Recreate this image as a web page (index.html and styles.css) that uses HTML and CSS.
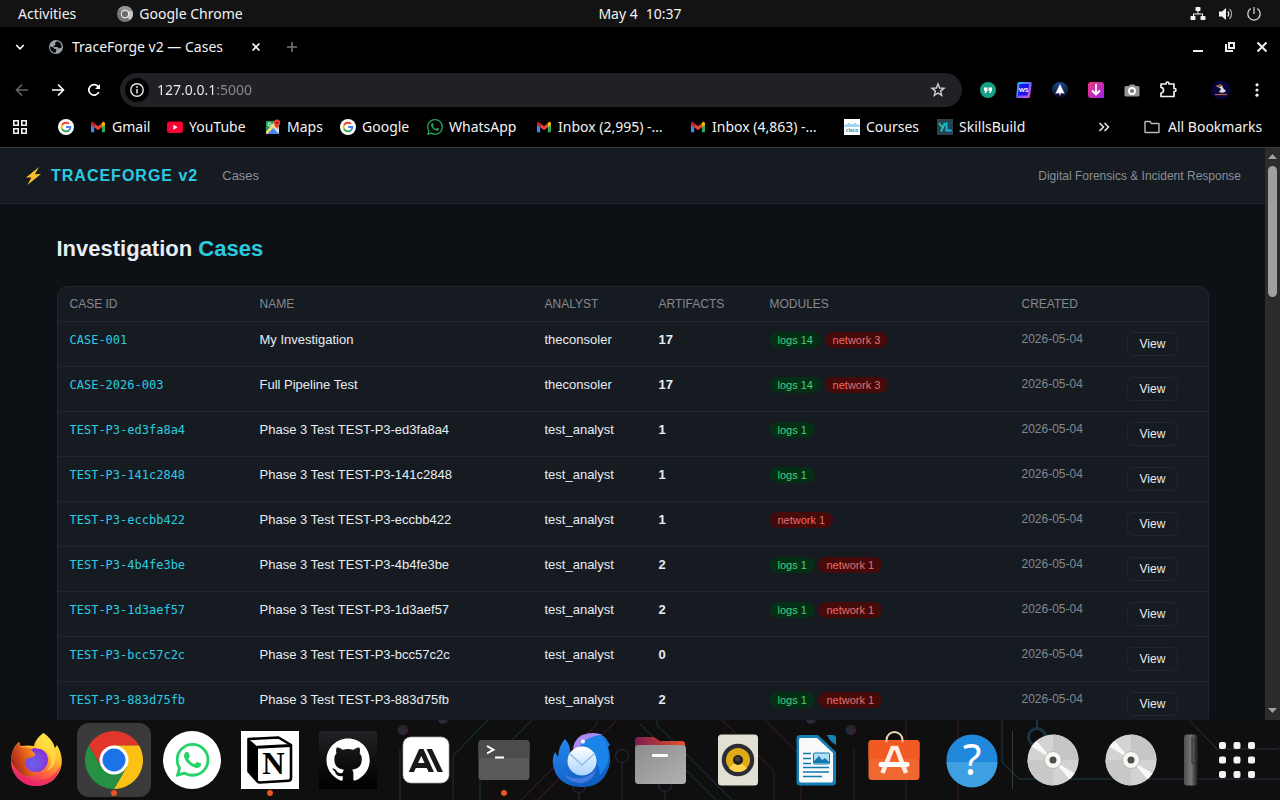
FILE: index.html
```html
<!DOCTYPE html>
<html lang="en">
<head>
<meta charset="utf-8">
<title>TraceForge v2 — Cases</title>
<link rel="stylesheet" href="styles.css">
</head>
<body>
<svg class="defs" aria-hidden="true">
  <defs>
    <symbol id="google" viewBox="0 0 16 16">
      <circle cx="8" cy="8" r="8" fill="#fff"/>
      <path d="M4.2 5.9A4.4 4.4 0 0 1 11 4.9" fill="none" stroke="#ea4335" stroke-width="1.9"/>
      <path d="M4.2 5.8A4.4 4.4 0 0 0 4.2 10.2" fill="none" stroke="#fbbc05" stroke-width="1.9"/>
      <path d="M4.1 10A4.4 4.4 0 0 0 10.8 11.4" fill="none" stroke="#34a853" stroke-width="1.9"/>
      <path d="M8 8H12.4A4.4 4.4 0 0 1 10.6 11.5" fill="none" stroke="#4285f4" stroke-width="1.9"/>
    </symbol>
    <symbol id="gmail" viewBox="0 0 16 16">
      <path d="M1 4.5V12.4q0 .9.9.9H4.2V6.8z" fill="#4285f4"/>
      <path d="M15 4.5V12.4q0 .9-.9.9H11.8V6.8z" fill="#34a853"/>
      <path d="M4.2 4.2 8 7.2l3.800-3V8.300L8 11.200 4.200 8.300z" fill="#ea4335"/>
      <path d="M1 4.500Q1 2.800 2.500 2.800 3.100 2.800 4.200 4.200V8.300L1 5.900z" fill="#c5221f"/>
      <path d="M15 4.500Q15 2.800 13.500 2.800 12.900 2.800 11.800 4.200V8.300L15 5.900z" fill="#fbbc04"/>
    </symbol>
    <symbol id="whatsapp" viewBox="0 0 24 24">
      <path fill="currentColor" d="M17.472 14.382c-.297-.149-1.758-.867-2.030-.967-.273-.099-.471-.148-.670.150-.197.297-.767.966-.940 1.164-.173.199-.347.223-.644.075-.297-.150-1.255-.463-2.390-1.475-.883-.788-1.480-1.761-1.653-2.059-.173-.297-.018-.458.130-.606.134-.133.298-.347.446-.520.149-.174.198-.298.298-.497.099-.198.050-.371-.025-.520-.075-.149-.669-1.612-.916-2.207-.242-.579-.487-.500-.669-.510-.173-.008-.371-.010-.570-.010-.198 0-.520.074-.792.372-.272.297-1.040 1.016-1.040 2.479 0 1.462 1.065 2.875 1.213 3.074.149.198 2.096 3.200 5.077 4.487.709.306 1.262.489 1.694.625.712.227 1.360.195 1.871.118.571-.085 1.758-.719 2.006-1.413.248-.694.248-1.289.173-1.413-.074-.124-.272-.198-.570-.347m-5.421 7.403h-.004a9.870 9.870 0 0 1-5.031-1.378l-.361-.214-3.741.982.998-3.648-.235-.374a9.860 9.860 0 0 1-1.510-5.260c.001-5.450 4.436-9.884 9.888-9.884 2.640 0 5.122 1.030 6.988 2.898a9.825 9.825 0 0 1 2.893 6.994c-.003 5.450-4.437 9.884-9.885 9.884m8.413-18.297A11.815 11.815 0 0 0 12.050 0C5.495 0 .160 5.335.157 11.892c0 2.096.547 4.142 1.588 5.945L.057 24l6.305-1.654a11.882 11.882 0 0 0 5.683 1.448h.005c6.554 0 11.890-5.335 11.893-11.893a11.821 11.821 0 0 0-3.480-8.413Z"/>
    </symbol>
    <symbol id="disc" viewBox="0 0 58 58">
      <circle cx="29" cy="29" r="25.500" fill="#d3d3d3"/>
      <path d="M29 29V3.500A25.500 25.500 0 0 1 54.500 29z" fill="#c6c6c6"/>
      <path d="M29 29V54.500A25.500 25.500 0 0 1 3.500 29z" fill="#c9c9c9"/>
      <path d="M29 29 7.500 15.500A25.500 25.500 0 0 1 12.500 9.700z" fill="#f8f8f8"/>
      <path d="M29 29 50.500 42.500A25.500 25.500 0 0 1 45.500 48.300z" fill="#f8f8f8"/>
      <circle cx="29" cy="29" r="8.500" fill="#f7f7f5" stroke="#b5aa98" stroke-width=".8"/>
      <circle cx="29" cy="29" r="3.500" fill="#4d4d4d"/>
    </symbol>
    <linearGradient id="ffBody" x1=".8" y1="0" x2=".3" y2="1">
      <stop offset="0" stop-color="#fff44f"/><stop offset=".35" stop-color="#ffbd2e"/><stop offset=".65" stop-color="#ff6a3c"/><stop offset="1" stop-color="#e2127a"/>
    </linearGradient>
    <linearGradient id="ffHead" x1="1" y1="0" x2="0" y2=".5">
      <stop offset="0" stop-color="#ffb02e"/><stop offset=".5" stop-color="#e8651c"/><stop offset="1" stop-color="#a8251c"/>
    </linearGradient>
    <radialGradient id="ffCore" cx=".4" cy=".65" r=".7"><stop offset="0" stop-color="#6b62f0"/><stop offset="1" stop-color="#8a2fd0"/></radialGradient>
    <linearGradient id="tbBody" x1="0" y1="0" x2=".4" y2="1"><stop offset="0" stop-color="#2a8df2"/><stop offset="1" stop-color="#0f5fc4"/></linearGradient>
    <linearGradient id="tbMail" x1="0" y1="0" x2="0" y2="1"><stop offset="0" stop-color="#fff"/><stop offset="1" stop-color="#a9d4ff"/></linearGradient>
    <linearGradient id="folderBack" x1="0" y1="0" x2="1" y2="0"><stop offset="0" stop-color="#7c1d4e"/><stop offset="1" stop-color="#e8512a"/></linearGradient>
    <linearGradient id="folderFront" x1="0" y1="0" x2="1" y2="1"><stop offset="0" stop-color="#8c8c8c"/><stop offset="1" stop-color="#b2b2b2"/></linearGradient>
    <linearGradient id="githubBack" x1="0" y1="0" x2="0" y2="1"><stop offset="0" stop-color="#202225"/><stop offset=".6" stop-color="#0b0c0d"/><stop offset="1" stop-color="#020202"/></linearGradient>
    <linearGradient id="drive" x1="0" y1="0" x2="1" y2="0"><stop offset="0" stop-color="#4e4e4e"/><stop offset=".5" stop-color="#777"/><stop offset="1" stop-color="#161616"/></linearGradient>
    <linearGradient id="wsBack" x1="0" y1="0" x2="1" y2="1"><stop offset="0" stop-color="#16d4f5"/><stop offset=".5" stop-color="#6a60ff"/><stop offset="1" stop-color="#ff45c8"/></linearGradient>
    <linearGradient id="dlBack" x1="0" y1="0" x2="1" y2="1"><stop offset="0" stop-color="#ef3c78"/><stop offset="1" stop-color="#a01cf0"/></linearGradient>
    <linearGradient id="rocketBack" x1="0" y1="0" x2="0" y2="1"><stop offset="0" stop-color="#174a8c"/><stop offset="1" stop-color="#0a0718"/></linearGradient>
    <linearGradient id="dot" x1="0" y1="0" x2="1" y2="0"><stop offset="0" stop-color="#1d3040"/><stop offset="1" stop-color="#3d1d29"/></linearGradient>
  </defs>
</svg>

<header class="topbar">
  <div class="topbar-left">
    <button type="button" class="plain">Activities</button>
    <button type="button" class="plain app-menu">
      <svg width="16" height="16" viewBox="0 0 16 16"><circle cx="8" cy="8" r="8" fill="#777"/><path d="M8 8 13 14.200A8 8 0 0 0 15.300 5H9z" fill="#c8c8c8"/><path d="M1.200 4A8 8 0 0 1 15.300 4.700H8z" fill="#969696"/><circle cx="8" cy="8" r="4.200" fill="#eee"/><circle cx="8" cy="8" r="3.100" fill="#6b6b6b"/></svg>
      Google Chrome
    </button>
  </div>
  <button type="button" class="plain clock"><span>May 4</span><span>10:37</span></button>
  <div class="topbar-right">
    <svg width="16" height="16" viewBox="0 0 16 16" fill="#f2f2f2"><rect x="5.500" y="1" width="5" height="4" rx=".7"/><rect x="0.500" y="10" width="5" height="4" rx=".7"/><rect x="10.500" y="10" width="5" height="4" rx=".7"/><path d="M7.500 5h1v2.500H13V10h-1V8.500H4V10H3V7.500h4.500z"/></svg>
    <svg width="16" height="16" viewBox="0 0 16 16" fill="none" stroke="#eee"><path d="M1 5.500H4L8 2V14L4 10.500H1z" fill="#f2f2f2" stroke="none"/><path d="M9.700 5.500a3.500 3.500 0 0 1 0 5" stroke-width="1.300"/><path d="M11.500 3a7 7 0 0 1 0 10" stroke="#aaa" stroke-width="1.200"/></svg>
    <svg width="16" height="16" viewBox="0 0 16 16" fill="none" stroke="#ddd" stroke-width="1.200"><path d="M4.800 2.600A6.200 6.200 0 1 0 11.200 2.600M8 1V8"/></svg>
  </div>
</header>

<nav class="tabs" aria-label="Tabs">
  <button type="button" class="icon-btn tab-search" aria-label="Search tabs"><svg width="10" height="10" viewBox="0 0 10 10" fill="none" stroke="#fff" stroke-width="1.700"><path d="M1.200 3 5 6.800 8.800 3"/></svg></button>
  <button type="button" class="plain tab">
    <svg width="16" height="16" viewBox="0 0 16 16"><circle cx="8" cy="8" r="7" fill="#9aa0a8"/><path d="M2 7.500 5.500 8.500 6.500 10 8.500 10.500 7.500 13.800A6 6 0 0 1 2 7.500zM9 2.200 7 4 7.500 6 5.500 7 6 8 9.500 8 11 9.500 13.500 8.500A6 6 0 0 0 9 2.200z" fill="#000"/></svg>
    <span>TraceForge v2 — Cases</span>
  </button>
  <button type="button" class="icon-btn tab-close" aria-label="Close tab"><svg width="8" height="8" viewBox="0 0 8 8" stroke="#fff" stroke-width="1.600"><path d="M.5.5 7.500 7.500M7.500.5.5 7.500"/></svg></button>
  <button type="button" class="icon-btn tab-new" aria-label="New tab"><svg width="12" height="12" viewBox="0 0 12 12" stroke="#777" stroke-width="1.500"><path d="M6 1V11M1 6H11"/></svg></button>
  <div class="window-buttons">
    <button type="button" class="icon-btn" aria-label="Minimize"><svg width="12" height="12" viewBox="0 0 12 12"><path d="M1 9H11V11H1z" fill="#eee"/></svg></button>
    <button type="button" class="icon-btn" aria-label="Restore"><svg width="12" height="12" viewBox="0 0 12 12" fill="none" stroke="#eee" stroke-width="2"><path d="M5 2H10V7H5zM2 3V10H9"/></svg></button>
    <button type="button" class="icon-btn" aria-label="Close window"><svg width="12" height="12" viewBox="0 0 12 12" stroke="#eee" stroke-width="2"><path d="M1.500 1.500 10.500 10.500M10.500 1.500 1.500 10.500"/></svg></button>
  </div>
</nav>

<div class="toolbar">
  <button type="button" class="icon-btn" aria-label="Back"><svg width="14" height="14" viewBox="0 0 14 14" fill="none" stroke="#666" stroke-width="1.600"><path d="M13 7H2M7 1.500 1.500 7 7 12.500"/></svg></button>
  <button type="button" class="icon-btn" aria-label="Forward"><svg width="14" height="14" viewBox="0 0 14 14" fill="none" stroke="#fff" stroke-width="1.600"><path d="M1 7H12M7 1.500 12.500 7 7 12.500"/></svg></button>
  <button type="button" class="icon-btn" aria-label="Reload"><svg width="14" height="14" viewBox="0 0 14 14"><path d="M11.800 9A5.200 5.200 0 1 1 10.700 3.200L12 4.500" fill="none" stroke="#fff" stroke-width="1.700"/><path d="M13 1V6H8z" fill="#fff"/></svg></button>
  <div class="omnibox">
    <button type="button" class="site-info" aria-label="Site information"><svg width="14" height="14" viewBox="0 0 14 14"><circle cx="7" cy="7" r="6.200" fill="none" stroke="#e8e8e8" stroke-width="1.400"/><path d="M7 6V10.500M7 3.300V4.900" stroke="#e8e8e8" stroke-width="1.500"/></svg></button>
    <input type="text" class="address" aria-label="Address" value="127.0.0.1:5000">
    <button type="button" class="icon-btn" aria-label="Bookmark this page"><svg width="16" height="16" viewBox="0 0 16 16" fill="none" stroke="#d0d0d0" stroke-width="1.400"><path d="M8 1.900 9.600 6 14 6.300 10.600 9.100 11.700 13.400 8 11 4.300 13.400 5.400 9.100 2 6.300 6.400 6z"/></svg></button>
  </div>
  <div class="extensions">
    <button type="button" class="icon-btn" aria-label="Quotes"><svg width="16" height="16" viewBox="0 0 16 16"><circle cx="8" cy="8" r="8" fill="#16a085"/><path d="M4 5.500H7.500V8.500L6 11H4.500L5.500 8.800H4zM8.500 5.500H12V8.500L10.500 11H9L10 8.800H8.500z" fill="#fff"/></svg></button>
    <button type="button" class="icon-btn" aria-label="WS"><svg width="16" height="16" viewBox="0 0 16 16"><path d="M3 0H14.500Q16 0 15.700 2L14 14.500Q13.800 16 12 16H1Q0 16 .2 14L1.500 1.500Q1.700 0 3 0z" fill="url(#wsBack)"/><path d="M3.500 2H13L11.500 13.500H2z" fill="#1c13e8"/><text x="7.600" y="10.200" font-family="Lato" font-size="6" font-weight="900" text-anchor="middle" fill="#fff">WS</text></svg></button>
    <button type="button" class="icon-btn" aria-label="Rocket"><svg width="16" height="16" viewBox="0 0 16 16"><circle cx="8" cy="8" r="8" fill="url(#rocketBack)"/><path d="M8 2 10.600 7.500 12.500 11.500 9 11 8 13.500 7 11 3.500 11.500 5.400 7.500z" fill="#fff" stroke="#9e8cff" stroke-width=".4"/></svg></button>
    <button type="button" class="icon-btn" aria-label="Download"><svg width="16" height="16" viewBox="0 0 16 16"><path d="M3 0H13Q16 0 16 3V16H3Q0 16 0 13V3Q0 0 3 0z" fill="url(#dlBack)"/><path d="M8 2V12.500M4 8.500 8 12.500 12 8.500" fill="none" stroke="#fff" stroke-width="1.800"/></svg></button>
    <button type="button" class="icon-btn" aria-label="Camera"><svg width="16" height="16" viewBox="0 0 16 16"><path d="M2 4H5L6 2.500H10.500L11.500 4H14Q15.500 4 15.500 5.500V13Q15.500 14.500 14 14.500H2Q.5 14.500.5 13V5.500Q.5 4 2 4z" fill="#969696"/><circle cx="8" cy="9" r="3" fill="#777" stroke="#fff" stroke-width="1.800"/></svg></button>
    <button type="button" class="icon-btn" aria-label="Extensions"><svg width="18" height="18" viewBox="0 0 18 18" fill="none" stroke="#f2f2f2" stroke-width="1.700" stroke-linejoin="round"><path d="M2 3H7V2.500a1.500 1.500 0 0 1 3 0V3H15V7.500h.5a1.500 1.500 0 0 1 0 3H15V15.500H2V12Q4.500 12 4.500 9.200 4.500 6.500 2 6.500z"/></svg></button>
  </div>
  <button type="button" class="icon-btn profile" aria-label="Profile"><svg width="20" height="20" viewBox="0 0 20 20"><circle cx="10" cy="10" r="9.700" fill="#06063a"/><path d="M5 6 9 4.500 11 5 12 8 15 11Q13 14 8 12L10 9 8 7.500z" fill="#d9dbe2"/><path d="M5 6 9 4 11.500 5.500 9 7z" fill="#a24a36"/><path d="M4 14.500H16" stroke="#b05a43" stroke-width="1.300"/></svg></button>
  <button type="button" class="icon-btn" aria-label="Menu"><svg width="16" height="16" viewBox="0 0 16 16" fill="#f2f2f2"><circle cx="8" cy="2.800" r="1.600"/><circle cx="8" cy="8" r="1.600"/><circle cx="8" cy="13.200" r="1.600"/></svg></button>
</div>

<nav class="bookmarks" aria-label="Bookmarks">
  <button type="button" class="icon-btn apps-btn" aria-label="Apps"><svg width="14" height="14" viewBox="0 0 14 14" fill="none" stroke="#f2f2f2" stroke-width="1.600"><path d="M.8.8H5.200V5.200H.8zM8.800.8H13.200V5.200H8.800zM.8 8.800H5.200V13.200H.8zM8.800 8.800H13.200V13.200H8.800z"/></svg></button>
  <div class="bookmark-list">
    <a href="#" aria-label="Google search"><svg><use href="#google"/></svg></a>
    <a href="#"><svg><use href="#gmail"/></svg><span>Gmail</span></a>
    <a href="#"><svg viewBox="0 0 16 16"><rect y="2.500" width="16" height="11.500" rx="3" fill="#f03"/><path d="M6.300 5.700 10.600 8.200 6.300 10.700z" fill="#fff"/></svg><span>YouTube</span></a>
    <a href="#"><svg viewBox="0 0 16 16"><rect x="1" y="2" width="13" height="13" rx="1.500" fill="#e8eaed"/><path d="M1 3Q1 2 2.500 2H10L1 13z" fill="#1e9e58"/><path d="M1.500 15 8 8.500 14 15z" fill="#4285f4"/><path d="M1 13 10.500 3 12 5 2.500 15Q1 15 1 13z" fill="#fdd663"/><path d="M8.500 9 14 14.500V7z" fill="#ddd"/><circle cx="4.500" cy="5.400" r="1.500" fill="none" stroke="#fff"/><path d="M12 .5A3.300 3.300 0 0 1 15.300 4Q15 6 12 10 9 6 8.700 4A3.300 3.300 0 0 1 12 .5z" fill="#e34133"/><circle cx="12" cy="3.900" r="1.100" fill="#8c1a11"/></svg><span>Maps</span></a>
    <a href="#"><svg><use href="#google"/></svg><span>Google</span></a>
    <a href="#" class="wa-link"><svg><use href="#whatsapp"/></svg><span>WhatsApp</span></a>
    <a href="#"><svg><use href="#gmail"/></svg><span>Inbox (2,995) -…</span></a>
    <a href="#"><svg><use href="#gmail"/></svg><span>Inbox (4,863) -…</span></a>
    <a href="#"><svg viewBox="0 0 16 16"><path d="M0 0H16V16H0z" fill="#fff"/><path d="M1 6V8M3 5V8M5 3.800V8M7 5V8M9 5V8M11 3.800V8M13 5V8M15 6V8" stroke="#2aa4d6" stroke-width=".9"/><text x="8" y="13" font-family="Lato" font-size="5.500" font-weight="900" text-anchor="middle" fill="#1b8fc0">cisco</text></svg><span>Courses</span></a>
    <a href="#"><svg viewBox="0 0 16 16"><path d="M0 0H16V16H0z" fill="#29434e"/><path d="M2 4 5 8M8 4 4 12.500" stroke="#19c5b0" stroke-width="2" fill="none"/><path d="M9.500 3.500V11.500H14.500" stroke="#12b8e8" stroke-width="2" fill="none"/></svg><span>SkillsBuild</span></a>
  </div>
  <button type="button" class="icon-btn more-btn" aria-label="More bookmarks"><svg width="12" height="12" viewBox="0 0 12 12" fill="none" stroke="#eee" stroke-width="1.500"><path d="M1.500 2 5.500 6 1.500 10M6.500 2 10.500 6 6.500 10"/></svg></button>
  <a href="#" class="all-bookmarks"><svg viewBox="0 0 16 16" fill="none" stroke="#bbb" stroke-width="1.400"><path d="M1 3Q1 2.500 1.500 2.500H6L7.500 4.500H14.500Q15 4.500 15 5V13Q15 13.500 14.500 13.500H1.500Q1 13.500 1 13z"/></svg><span>All Bookmarks</span></a>
</nav>

<div class="viewport">
  <div class="page">
    <header class="site-header">
      <a href="#" class="brand"><svg width="18" height="18" viewBox="0 0 18 18"><path d="M15 0 2 10.600 7.400 10.400 3.400 18 17 7 10.800 7.300z" fill="#fbc02d"/></svg>TRACEFORGE v2</a>
      <a href="#" class="site-link">Cases</a>
      <span class="tagline">Digital Forensics &amp; Incident Response</span>
    </header>
    <main class="content">
      <h1>Investigation <span>Cases</span></h1>
      <div class="card">
        <table>
          <colgroup><col class="c-id"><col class="c-name"><col class="c-analyst"><col class="c-artifacts"><col class="c-modules"><col class="c-created"><col class="c-action"></colgroup>
          <thead><tr><th>CASE ID</th><th>NAME</th><th>ANALYST</th><th>ARTIFACTS</th><th>MODULES</th><th>CREATED</th><td></td></tr></thead>
          <tbody>
            <tr><td class="id">CASE-001</td><td>My Investigation</td><td>theconsoler</td><td><b>17</b></td><td><span class="badge logs">logs 14</span> <span class="badge network">network 3</span></td><td class="date">2026-05-04</td><td><a href="#" class="view">View</a></td></tr>
            <tr><td class="id">CASE-2026-003</td><td>Full Pipeline Test</td><td>theconsoler</td><td><b>17</b></td><td><span class="badge logs">logs 14</span> <span class="badge network">network 3</span></td><td class="date">2026-05-04</td><td><a href="#" class="view">View</a></td></tr>
            <tr><td class="id">TEST-P3-ed3fa8a4</td><td>Phase 3 Test TEST-P3-ed3fa8a4</td><td>test_analyst</td><td><b>1</b></td><td><span class="badge logs">logs 1</span></td><td class="date">2026-05-04</td><td><a href="#" class="view">View</a></td></tr>
            <tr><td class="id">TEST-P3-141c2848</td><td>Phase 3 Test TEST-P3-141c2848</td><td>test_analyst</td><td><b>1</b></td><td><span class="badge logs">logs 1</span></td><td class="date">2026-05-04</td><td><a href="#" class="view">View</a></td></tr>
            <tr><td class="id">TEST-P3-eccbb422</td><td>Phase 3 Test TEST-P3-eccbb422</td><td>test_analyst</td><td><b>1</b></td><td><span class="badge network">network 1</span></td><td class="date">2026-05-04</td><td><a href="#" class="view">View</a></td></tr>
            <tr><td class="id">TEST-P3-4b4fe3be</td><td>Phase 3 Test TEST-P3-4b4fe3be</td><td>test_analyst</td><td><b>2</b></td><td><span class="badge logs">logs 1</span> <span class="badge network">network 1</span></td><td class="date">2026-05-04</td><td><a href="#" class="view">View</a></td></tr>
            <tr><td class="id">TEST-P3-1d3aef57</td><td>Phase 3 Test TEST-P3-1d3aef57</td><td>test_analyst</td><td><b>2</b></td><td><span class="badge logs">logs 1</span> <span class="badge network">network 1</span></td><td class="date">2026-05-04</td><td><a href="#" class="view">View</a></td></tr>
            <tr><td class="id">TEST-P3-bcc57c2c</td><td>Phase 3 Test TEST-P3-bcc57c2c</td><td>test_analyst</td><td><b>0</b></td><td></td><td class="date">2026-05-04</td><td><a href="#" class="view">View</a></td></tr>
            <tr><td class="id">TEST-P3-883d75fb</td><td>Phase 3 Test TEST-P3-883d75fb</td><td>test_analyst</td><td><b>2</b></td><td><span class="badge logs">logs 1</span> <span class="badge network">network 1</span></td><td class="date">2026-05-04</td><td><a href="#" class="view">View</a></td></tr>
          </tbody>
        </table>
      </div>
    </main>
  </div>
  <div class="scrollbar" aria-hidden="true">
    <svg width="15" height="18" viewBox="0 0 15 18"><path d="M3 11H12L7.500 6z" fill="#a0a0a0"/></svg>
    <div class="track"><div class="thumb"></div></div>
    <svg width="15" height="18" viewBox="0 0 15 18"><path d="M3 6H12L7.500 11z" fill="#a0a0a0"/></svg>
  </div>
</div>

<footer class="dock">
  <svg class="circuit" width="1280" height="80" viewBox="0 720 1280 80" fill="none" stroke-width="1.300" aria-hidden="true">
    <g stroke="#162a34"><path d="M488 720 453 756V800M532 720 480 772V800M640 724 716 800M657 720V725L732 800"/><path d="M1002 720V762L1019 779H1140" stroke="#183039"/></g>
    <g stroke="#252331"><path d="M400 749V800M622 763V800M579 793V800M854 749V800M665 792V800M1189 720 1217 749H1278L1280 747M1140 779H1280"/><circle cx="622" cy="756" r="6.500"/><circle cx="579" cy="786" r="6.500"/><circle cx="665" cy="785" r="6.500"/></g>
    <g stroke="#301923"><path d="M597 720V724L521 800M617 720 538 800M722 720 774 771V800M765 720 801 756V800M906 720V800M958 720V800"/></g>
    <g fill="url(#dot)"><circle cx="403" cy="730" r="5"/><circle cx="443" cy="719" r="5"/><circle cx="811" cy="719" r="5"/><circle cx="851" cy="730" r="5"/></g>
    <path d="M1037 720V728" stroke="#183743" stroke-width="2"/><circle cx="1037" cy="737" r="8.500" stroke="#183743" stroke-width="3"/>
  </svg>
  <div class="dock-items">
    <button type="button" aria-label="Firefox"><svg viewBox="0 0 58 58"><path d="M36.500 2C42 6 46 10 48 17L50 14Q56 24 54.500 34C52 47 42 55 29 55 15 55 4 44 4 30 4 22 7 15 12 11L13.500 15Q22 14 27 15 28 8 36.500 2z" fill="url(#ffBody)"/><circle cx="29" cy="29" r="12" fill="url(#ffCore)"/><path d="M4 30Q4 18 12.500 11L13.500 16 22 17 28.500 23Q27 27 21 27 17 29 19 36 23 43 31 42 20 50 11 40 6 35 4 30z" fill="url(#ffHead)"/><path d="M29 18Q38 17 42 23 47 31 40 40 50 35 49 23 45 10 36.500 2 29 7 30 16z" fill="#ffdf45" opacity=".7"/><path d="M6 38Q20 54 39 48 48 45 53 35 50 54 29 55 13 55 6 38z" fill="#ee2867" opacity=".65"/></svg></button>
    <button type="button" class="active running" aria-label="Google Chrome"><svg viewBox="0 0 48 48"><path d="M24 12H44.780A24 24 0 0 0 3.220 12L13.600 30 24 24z" fill="#e0362c"/><path d="M34.390 30 24 48A24 24 0 0 0 44.780 12H24V24z" fill="#fcc213"/><path d="M13.600 30 3.220 12A24 24 0 0 0 24 48L34.390 30 24 24z" fill="#269044"/><circle cx="24" cy="24" r="12" fill="#fff"/><circle cx="24" cy="24" r="9.500" fill="#1a73e8"/></svg></button>
    <button type="button" class="wa" aria-label="WhatsApp"><svg viewBox="0 0 58 58"><circle cx="29" cy="29" r="29" fill="#fff"/><use href="#whatsapp" x="12.500" y="12" width="34" height="34"/></svg></button>
    <button type="button" class="running" aria-label="Notion"><svg viewBox="0 0 58 58"><path d="M0 0H58V58H0z" fill="#fff"/><path d="M7.500 8 37.500 6.500 50 14V47Q50 49.500 47.500 49.700L18.500 51.500Q17 51.500 16 50L7.500 40.500z" fill="#fff" stroke="#000" stroke-width="2.600" stroke-linejoin="round"/><path d="M7.500 8 17 16V51L7.500 40.500z" fill="#000"/><path d="M16 16.300 50 14.500" stroke="#000" stroke-width="3"/><text x="32.500" y="43" font-family="Liberation Serif, serif" font-size="31" font-weight="700" text-anchor="middle">N</text></svg></button>
    <button type="button" aria-label="GitHub"><svg viewBox="0 0 58 58"><path d="M0 0H58V58H0z" fill="url(#githubBack)"/><path transform="translate(7.500 7) scale(1.800)" fill="#fff" d="M12 .297c-6.630 0-12 5.373-12 12 0 5.303 3.438 9.800 8.205 11.385.600.113.820-.258.820-.577 0-.285-.010-1.040-.015-2.040-3.338.724-4.042-1.610-4.042-1.610C4.422 18.070 3.633 17.700 3.633 17.700c-1.087-.744.084-.729.084-.729 1.205.084 1.838 1.236 1.838 1.236 1.070 1.835 2.809 1.305 3.495.998.108-.776.417-1.305.760-1.605-2.665-.300-5.466-1.332-5.466-5.930 0-1.310.465-2.380 1.235-3.220-.135-.303-.540-1.523.105-3.176 0 0 1.005-.322 3.300 1.230.960-.267 1.980-.399 3-.405 1.020.006 2.040.138 3 .405 2.280-1.552 3.285-1.230 3.285-1.230.645 1.653.240 2.873.120 3.176.765.840 1.230 1.910 1.230 3.220 0 4.610-2.805 5.625-5.475 5.920.420.360.810 1.096.810 2.220 0 1.606-.015 2.896-.015 3.286 0 .315.210.690.825.570C20.565 22.092 24 17.592 24 12.297c0-6.627-5.373-12-12-12"/></svg></button>
    <button type="button" aria-label="Anthropic"><svg viewBox="0 0 58 58"><rect x="6" y="6" width="46" height="46" rx="8" fill="#fff" stroke="#aaa" stroke-width=".7"/><path d="M13 44 24.300 19 35.600 44M18 34.500H31" fill="none" stroke="#191919" stroke-width="4.800" stroke-linejoin="bevel"/><path d="M29.500 18H35L46 41H40.500z" fill="#191919"/><rect x="9" y="41" width="40" height="7" fill="#fff"/></svg></button>
    <button type="button" class="running" aria-label="Terminal"><svg viewBox="0 0 58 58"><rect x="3.500" y="9" width="51" height="40" rx="3.500" fill="#5a5a5a"/><path d="M3.500 27V12.500Q3.500 9 7 9H51Q54.500 9 54.500 12.500V27z" fill="#4c4c4c"/><path d="M12 15 18.500 18.700 12 22.500M20 26.500H29" fill="none" stroke="#fff" stroke-width="2"/></svg></button>
    <button type="button" aria-label="Thunderbird"><svg viewBox="0 0 58 58"><path d="M12 8Q18 15 17 22 19 20 22 20 23 10 29 6 36 1 45 3 52 4 55 11L57 14 55 16Q60 31 53 43 46 56 29 56 11 56 3 43-3 30 2 21L5 26Q6 14 12 8z" fill="url(#tbBody)"/><path d="M20 20Q20 9 29 4 40 0 50 4 40 4 35 9 29 12 25 18z" fill="#a98bf0"/><path d="M25 18Q34 4 45 6 52 7 54 15 59 31 47 44 46 22 25 18z" fill="#1a84ea"/><circle cx="29" cy="30" r="14.500" fill="url(#tbMail)"/><path d="M17 23 29 34 41 23" fill="none" stroke="#8eb9e8" stroke-width="1.300"/><path d="M10 42Q17 49 29 47 38 45 43 38 40 51 28 52 16 52 10 42z" fill="#5b83e8" opacity=".7"/><circle cx="30" cy="10.500" r="2" fill="#fff"/></svg></button>
    <button type="button" aria-label="Files"><svg viewBox="0 0 58 58"><path d="M4 17V9Q4 6 7 6H23L29 10H51Q54 10 54 13V25H4z" fill="url(#folderBack)"/><rect x="4" y="14" width="51" height="39" rx="3.500" fill="url(#folderFront)"/><rect x="21" y="23" width="16" height="3" rx="1" fill="#fff"/></svg></button>
    <button type="button" aria-label="Rhythmbox"><svg viewBox="0 0 58 58"><rect x="9" y="3.500" width="40" height="51" rx="3.500" fill="#e2dfd3"/><circle cx="29" cy="29" r="16.200" fill="#2c2c35"/><circle cx="29" cy="29" r="12" fill="#e0aa16"/><path d="M29 29 20 37A12 12 0 0 0 38 37z" fill="#ffd34e"/><circle cx="29" cy="29" r="5" fill="#24221e"/><circle cx="28.500" cy="28" r="2.500" fill="#45403a"/></svg></button>
    <button type="button" aria-label="LibreOffice Writer"><svg viewBox="0 0 58 58"><path d="M13 4H31L49 21V51Q49 54.500 45.500 54.500H13Q9.500 54.500 9.500 51V7.500Q9.500 4 13 4z" fill="#157eb3"/><path d="M40 4H46Q49 4 49 7V14Q43 11 40 4z" fill="#187fb4"/><path d="M14 7H30L46 22V49Q46 51.500 44 51.500H14Q12 51.500 12 49V9Q12 7 14 7z" fill="#f7f9fa"/><path d="M16 22.500H24M16 27.500H24M16 32.500H24M16 36.500H42M16 41H42M16 45.500H35" stroke="#1278ad" stroke-width="1.700"/><rect x="26.500" y="22" width="16" height="11" rx="1" fill="#aedff6" stroke="#1278ad"/><path d="M27 32V30L32 25 35 29 38 27 42 31V32z" fill="#1278ad"/></svg></button>
    <button type="button" aria-label="Software"><svg viewBox="0 0 58 58"><rect x="3.500" y="9" width="51" height="40" rx="3.500" fill="#f0672f"/><path d="M3.500 28V12.500Q3.500 9 7 9H51Q54.500 9 54.500 12.500V28z" fill="#f15a22"/><path d="M21.500 11V9A8 8 0 0 1 37.500 9V11" fill="none" stroke="#eed8b2" stroke-width="2"/><path d="M17.500 42 27.500 17H31.500L41 42" fill="none" stroke="#ffece3" stroke-width="4.500"/><rect x="13.500" y="31" width="31" height="5" rx="2.500" fill="#fff"/></svg></button>
    <button type="button" aria-label="Help"><svg viewBox="0 0 58 58"><circle cx="29" cy="29" r="25.500" fill="#2189dc"/><path d="M3.500 31H54.500A25.500 25.500 0 0 1 3.500 31z" fill="#3e9fe3"/><text x="29" y="44" font-family="Noto Sans, sans-serif" font-size="43" text-anchor="middle" fill="#fff">?</text></svg></button>
    <span class="divider"></span>
    <button type="button" aria-label="Disc 1"><svg><use href="#disc"/></svg></button>
    <button type="button" aria-label="Disc 2"><svg><use href="#disc"/></svg></button>
    <button type="button" class="cut" aria-label="Drive"><svg viewBox="0 0 20 58"><rect x="6" y="3.500" width="14" height="51" rx="3" fill="url(#drive)"/><path d="M14 6V32H20M16 10H20M16 16H20M16 22H20M16 27H20" fill="none" stroke="#2b2b2b"/></svg></button>
    <button type="button" aria-label="Show applications"><svg viewBox="0 0 58 58" fill="#f4f4f4"><rect x="11" y="11" width="7" height="7" rx="2"/><rect x="25.500" y="11" width="7" height="7" rx="2"/><rect x="40" y="11" width="7" height="7" rx="2"/><rect x="11" y="25.500" width="7" height="7" rx="2"/><rect x="25.500" y="25.500" width="7" height="7" rx="2"/><rect x="40" y="25.500" width="7" height="7" rx="2"/><rect x="11" y="40" width="7" height="7" rx="2"/><rect x="25.500" y="40" width="7" height="7" rx="2"/><rect x="40" y="40" width="7" height="7" rx="2"/></svg></button>
  </div>
</footer>
</body>
</html>
```

FILE: styles.css
```css
* { box-sizing: border-box; }

body {
  margin: 0;
  height: 100vh;
  display: flex;
  flex-direction: column;
  overflow: hidden;
  background: #000;
  color: #f2f2f2;
  font: 14px/20px "Noto Sans", sans-serif;
}

button { font: inherit; color: inherit; background: none; border: 0; padding: 0; }
a { color: inherit; text-decoration: none; }
svg { display: block; flex: none; overflow: visible; }
.defs { position: absolute; width: 0; height: 0; }
.plain { display: flex; align-items: center; gap: 6px; white-space: nowrap; }
.icon-btn { display: flex; align-items: center; justify-content: center; width: 36px; height: 34px; flex: none; }

/* Desktop top bar */
.topbar { flex: none; display: grid; grid-template-columns: 1fr auto 1fr; align-items: center; height: 27px; padding: 0 18px; background: #131313; }
.topbar-left { display: flex; gap: 41px; }
.clock { gap: 8px; }
.topbar-right { display: flex; justify-content: flex-end; gap: 12px; }

/* Tab strip */
.tabs { flex: none; display: flex; align-items: center; height: 40px; padding-left: 2px; }
.tab { gap: 8px; width: 192px; padding-left: 10px; }
.tab-close { width: 36px; margin-left: 8px; }
.window-buttons { display: flex; margin-left: auto; margin-right: 2px; }
.window-buttons .icon-btn { width: 32px; }

/* Toolbar */
.toolbar { flex: none; display: flex; align-items: center; height: 46px; padding: 0 5px 0 4px; }
.omnibox { flex: 1; display: flex; align-items: center; height: 34px; margin: 0 8px; padding: 0 6px 0 5px; border-radius: 17px; background: #202124; }
.site-info { display: flex; align-items: center; justify-content: center; width: 24px; height: 24px; border-radius: 50%; background: #000; }
.address {
  flex: 1;
  min-width: 0;
  margin-left: 8px;
  padding: 0;
  border: 0;
  outline: 0;
  font: inherit;
  color: transparent;
  background: linear-gradient(90deg, #f2f2f2 58px, #8a8a8a 58px) text;
}
.extensions { display: flex; }
.profile { margin-left: 17px; }

/* Bookmarks */
.bookmarks { flex: none; display: flex; align-items: center; height: 35px; padding: 0 14px 6px 2px; border-bottom: 1px solid #3c3c3c; }
.bookmark-list { display: grid; grid-template-columns: 16px 61px 82px 59px 71px 93px 138px 138px 77px 92px; gap: 16px; margin-left: 20px; }
.bookmarks a { display: flex; align-items: center; gap: 6px; white-space: nowrap; }
.bookmarks a svg { width: 16px; height: 16px; }
.wa-link svg { color: #25a35a; }
.more-btn { margin-left: auto; margin-right: 22px; }
.bookmarks .all-bookmarks { gap: 8px; min-width: 122px; }

/* Page area */
.viewport { flex: 1; min-height: 0; display: flex; overflow: hidden; background: #0d1014; }
.page { flex: 1; min-width: 0; overflow: hidden; color: #e6edf3; font: 13px/15px "Liberation Sans", Arial, sans-serif; }
.site-header { display: flex; align-items: center; gap: 24px; height: 56px; padding: 0 24px; background: #161b22; border-bottom: 1px solid #21262d; }
.brand { display: flex; align-items: center; gap: 9px; color: #2acbe0; font-size: 16px; font-weight: 700; letter-spacing: 1px; }
.site-link { color: #8a8f96; }
.tagline { margin-left: auto; color: #8a8f96; font-size: 12px; line-height: 16px; }
.content { max-width: 1200px; margin: 0 auto; padding: 32px 24px; }
h1 { margin: 0 0 25px; font-size: 22px; line-height: 25px; }
h1 span { color: #2acbe0; }
.card { overflow: hidden; border: 1px solid #21262d; border-radius: 10px; background: #161b22; }
table { width: 100%; table-layout: fixed; border-collapse: separate; border-spacing: 0; }
th, td { padding: 10px 12px; border-bottom: 1px solid #21262d; text-align: left; vertical-align: top; }
th { color: #84898f; font-size: 12px; font-weight: 400; line-height: 14px; }
.c-id { width: 190px; }
.c-name { width: 285px; }
.c-analyst { width: 114px; }
.c-artifacts { width: 111px; }
.c-modules { width: 252px; }
.c-created { width: 105px; }
.c-action { width: 93px; }
.id { color: #2acbe0; font: 12px/17px "DejaVu Sans Mono", monospace; }
.date { color: #84898f; font-size: 12px; line-height: 14px; }
.badge { display: inline-block; padding: 2px 8px; border-radius: 10px; font-size: 11px; line-height: 12px; }
.logs { background: #052e16; color: #46cf79; }
.network { background: #450a0a; color: #ea6c6c; }
.view { display: block; width: max-content; padding: 4px 12px; border: 1px solid #21262d; border-radius: 6px; font-size: 12px; line-height: 14px; }

.scrollbar { display: flex; flex-direction: column; flex: none; width: 15px; background: #2c2c2c; }
.track { flex: 1; padding: 0 3px; }
.thumb { height: 131px; border-radius: 5px; background: #9f9f9f; }

/* Dock */
.dock { flex: none; position: relative; height: 80px; overflow: hidden; background: #0f0f0f; }
.circuit { position: absolute; inset: 0; }
.dock-items { position: relative; display: flex; align-items: center; height: 80px; margin-left: -3px; }
.dock-items button { position: relative; flex: none; display: flex; align-items: center; justify-content: center; width: 74px; height: 74px; margin: 0 2px; border-radius: 12px; }
.dock-items svg { width: 58px; height: 58px; }
.dock-items .active { background: #3a3a3a; }
.wa { color: #25d366; }
.running::after { content: ""; position: absolute; left: 34px; bottom: 1px; width: 6px; height: 6px; border-radius: 50%; background: #e95420; }
.divider { flex: none; width: 1px; height: 58px; margin: 0 1px; background: #3c3c3c; }
.dock-items .cut { width: 20px; margin: 0 0 0 8px; }
.dock-items .cut svg { width: 20px; }
```
